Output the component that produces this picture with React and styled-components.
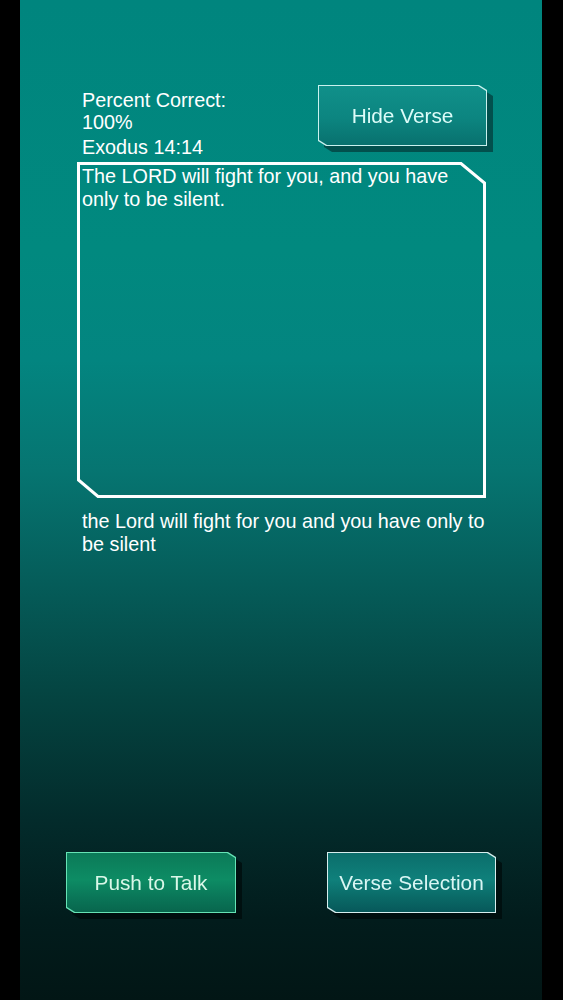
import React from 'react'
import styled, { createGlobalStyle } from 'styled-components'

const GlobalStyle = createGlobalStyle`
  html, body {
    margin: 0;
    padding: 0;
    background: #000;
  }
  body {
    font-family: "Liberation Sans", Arial, sans-serif;
  }
`

const Screen = styled.div`
  width: 563px;
  height: 1000px;
  display: flex;
  background: #000;
`

const Panel = styled.main`
  width: 522px;
  height: 1000px;
  margin-left: 20px;
  box-sizing: border-box;
  padding: 85px 0 87px;
  display: flex;
  flex-direction: column;
  background: linear-gradient(
    to bottom,
    #00857e 0%,
    #01897f 25%,
    #038580 36%,
    #067571 47%,
    #055d5a 58%,
    #044340 70%,
    #032b2b 82%,
    #021c1c 92%,
    #021615 100%
  );
  color: #fff;
`

const Header = styled.header`
  display: flex;
  justify-content: space-between;
  align-items: flex-start;
  padding: 0 55px 0 62px;
  height: 77px;
`

const Info = styled.div`
  display: flex;
  flex-direction: column;
  padding-top: 4px;
  font-size: 19.8px;
  line-height: 22px;
`

const Reference = styled.div`
  margin-top: 3px;
`

const VerseBox = styled.section`
  position: relative;
  width: 409px;
  height: 336px;
  margin-left: 57px;
  box-sizing: border-box;
  padding: 3px 8px 0 5px;
  font-size: 19.8px;
  line-height: 23px;
`

const Frame = styled.svg`
  position: absolute;
  inset: 0;
  width: 100%;
  height: 100%;
  pointer-events: none;
`

const VerseText = styled.p`
  position: relative;
  margin: 0;
`

const Spoken = styled.p`
  margin: 12px 0 0 62px;
  width: 412px;
  font-size: 19.8px;
  line-height: 23px;
`

const Footer = styled.footer`
  margin-top: auto;
  display: flex;
  justify-content: space-between;
  padding: 0 46px 0 46px;
`

const ButtonShell = styled.div`
  filter: drop-shadow(6px 6px 0 ${({ $shadow }) => $shadow});
  width: ${({ $w }) => $w}px;
  height: 61px;
`

const cut = `polygon(0 0, calc(100% - 8px) 0, 100% 5px, 100% 100%, 8px 100%, 0 calc(100% - 5px))`

const ButtonFace = styled.button`
  width: 100%;
  height: 100%;
  padding: 1px;
  border: 0;
  margin: 0;
  display: block;
  clip-path: ${cut};
  background: ${({ $edge }) => $edge};
  cursor: pointer;
`

const ButtonFill = styled.span`
  display: flex;
  align-items: center;
  justify-content: center;
  width: 100%;
  height: 100%;
  padding-top: 1px;
  box-sizing: border-box;
  clip-path: ${cut};
  background: ${({ $fill }) => $fill};
  color: ${({ $ink }) => $ink};
  font-family: "Liberation Sans", Arial, sans-serif;
  font-size: 20.8px;
`

const themes = {
  teal: {
    edge: '#c9f1ee',
    fill: 'linear-gradient(to bottom, #10908a 0%, #0c8580 55%, #08716e 100%)',
    ink: '#dcfcf8',
    shadow: 'rgba(2, 70, 68, 0.85)',
  },
  green: {
    edge: '#66e3b5',
    fill: 'linear-gradient(to bottom, #0b7a58 0%, #0d8c64 45%, #0a7658 75%, #08664d 100%)',
    ink: '#d9f7e8',
    shadow: 'rgba(0, 10, 10, 0.7)',
  },
  deep: {
    edge: '#d6eeee',
    fill: 'linear-gradient(to bottom, #0b6e6b 0%, #0f807b 45%, #0a6a67 75%, #07585a 100%)',
    ink: '#d9f6f4',
    shadow: 'rgba(0, 10, 10, 0.7)',
  },
}

function CutButton({ tone, width, children }) {
  const t = themes[tone]
  return (
    <ButtonShell $w={width} $shadow={t.shadow}>
      <ButtonFace $edge={t.edge}>
        <ButtonFill $fill={t.fill} $ink={t.ink}>{children}</ButtonFill>
      </ButtonFace>
    </ButtonShell>
  )
}

function VerseFrame() {
  // white outline with the two clipped corners
  return (
    <Frame viewBox="0 0 409 336" preserveAspectRatio="none">
      <polygon
        points="1.5,1.5 384,1.5 407.5,21 407.5,334.5 21,334.5 1.5,318"
        fill="none"
        stroke="#ffffff"
        strokeWidth="3"
      />
    </Frame>
  )
}

export default function App() {
  return (
    <Screen>
      <GlobalStyle />
      <Panel>
        <Header>
          <Info>
            <div>Percent Correct:</div>
            <div>100%</div>
            <Reference>Exodus 14:14</Reference>
          </Info>
          <CutButton tone="teal" width={169}>Hide Verse</CutButton>
        </Header>
        <VerseBox>
          <VerseFrame />
          <VerseText>The LORD will fight for you, and you have only to be silent.</VerseText>
        </VerseBox>
        <Spoken>the Lord will fight for you and you have only to be silent</Spoken>
        <Footer>
          <CutButton tone="green" width={170}>Push to Talk</CutButton>
          <CutButton tone="deep" width={169}>Verse Selection</CutButton>
        </Footer>
      </Panel>
    </Screen>
  )
}
